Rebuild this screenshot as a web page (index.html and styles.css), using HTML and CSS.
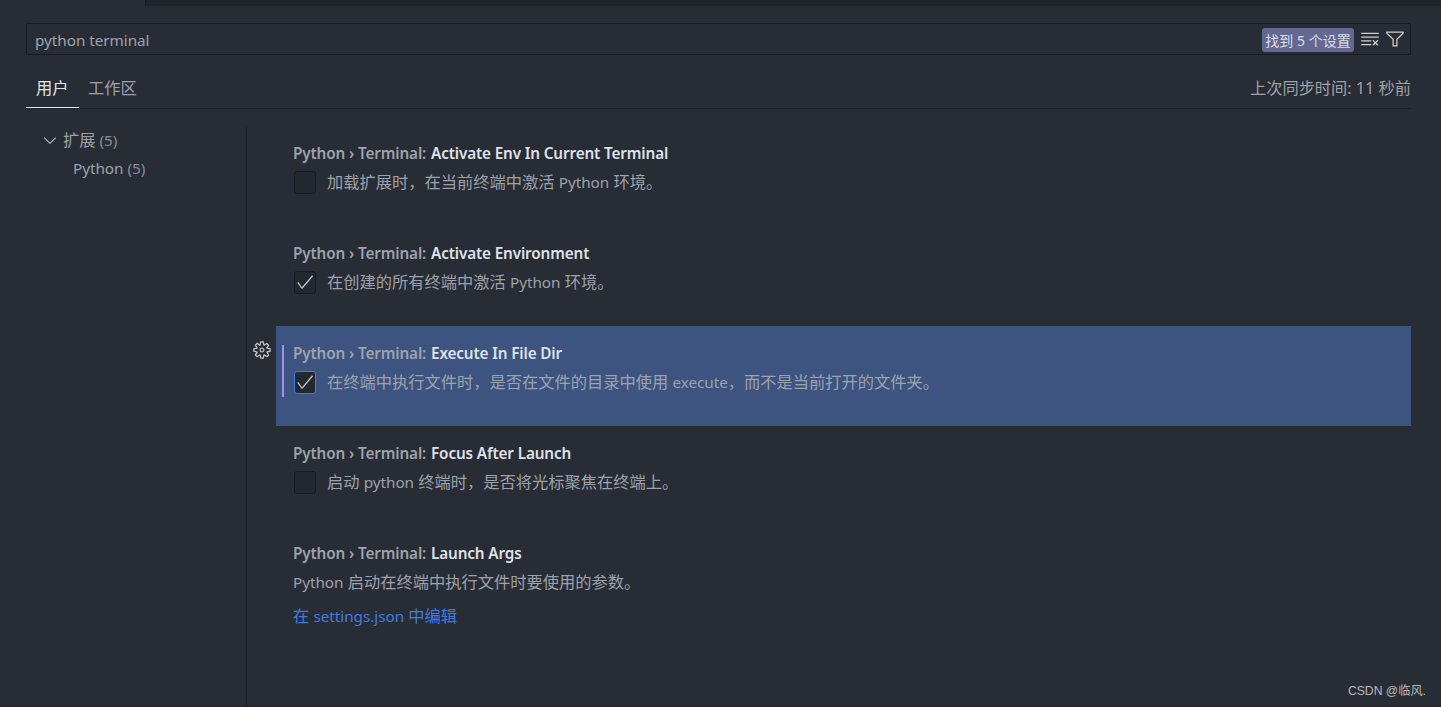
FILE: index.html
```
<!DOCTYPE html>
<html lang="zh-CN">
<head>
  <meta charset="UTF-8">
  <title>设置</title>
  <link rel="stylesheet" href="styles.css">
</head>
<body>
  <div class="tab-strip"></div>
  <div class="settings">
    <div class="search">
      <span class="search-text en">python terminal</span>
      <span class="badge">找到 5 个设置</span>
      <svg class="icon" viewBox="0 0 16 16"><path d="M10 12.6l.7.7 1.6-1.6 1.6 1.6.8-.7L13 11l1.7-1.6-.8-.8-1.6 1.7-1.6-1.7-.7.8 1.6 1.6-1.6 1.6zM1 4h14V3H1v1zm0 3h14V6H1v1zm8 2.5V9H1v1h8v-.5zM9 13v-1H1v1h8z"/></svg>
      <svg class="icon filter" viewBox="0 0 16 16"><path d="M15 2v1.67l-5 4.759V14H6V8.429l-5-4.76V2h14zM7 8v5h2V8l5-4.76V3H2v.24L7 8z"/></svg>
    </div>

    <div class="scope">
      <div class="scope-tab active">用户</div>
      <div class="scope-tab">工作区</div>
      <div class="sync">上次同步时间: 11 秒前</div>
    </div>

    <div class="main">
      <div class="toc">
        <div class="toc-row">
          <svg class="chevron" viewBox="0 0 16 16"><path d="M7.976 10.072l4.357-4.357.62.618L8.284 11h-.618L3 6.333l.619-.618 4.357 4.357z"/></svg>
          <span>扩展</span><span class="en count">(5)</span>
        </div>
        <div class="toc-row child"><span class="en">Python</span><span class="en count">(5)</span></div>
      </div>

      <div class="list">
        <div class="item">
          <div class="title"><span class="category">Python › Terminal:</span><span class="name">Activate Env In Current Terminal</span></div>
          <div class="desc"><span class="checkbox"></span><span>加载扩展时，在当前终端中激活 <span class="en">Python</span> 环境。</span></div>
        </div>
        <div class="item">
          <div class="title"><span class="category">Python › Terminal:</span><span class="name">Activate Environment</span></div>
          <div class="desc"><span class="checkbox"><svg class="check" viewBox="0 0 16 16"><path d="M14.431 3.323l-8.47 10-.79-.036-3.35-4.77.818-.574 2.978 4.24 8.051-9.506.764.646z"/></svg></span><span>在创建的所有终端中激活 <span class="en">Python</span> 环境。</span></div>
        </div>
        <div class="item selected">
          <svg class="gear" viewBox="0 0 16 16"><path fill-rule="evenodd" d="M9.1 4.4L8.6 2H7.4l-.5 2.4-.7.3-2-1.3-.9.8 1.3 2-.2.7-2.4.5v1.2l2.4.5.3.8-1.3 2 .8.8 2-1.3.8.3.4 2.3h1.2l.5-2.4.8-.3 2 1.3.8-.8-1.3-2 .3-.8 2.3-.4V7.4l-2.4-.5-.3-.8 1.3-2-.8-.8-2 1.3-.7-.2zM9.4 1l.5 2.4L12 2.1l2 2-1.4 2.1 2.4.4v2.8l-2.4.5L14 12l-2 2-2.1-1.4-.5 2.4H6.6l-.5-2.4L4 13.9l-2-2 1.4-2.1L1 9.4V6.6l2.4-.5L2.1 4l2-2 2.1 1.4.4-2.4h2.8zm.6 7c0 1.1-.9 2-2 2s-2-.9-2-2 .9-2 2-2 2 .9 2 2zM8 9c.6 0 1-.4 1-1s-.4-1-1-1-1 .4-1 1 .4 1 1 1z"/></svg>
          <div class="modified"></div>
          <div class="title"><span class="category">Python › Terminal:</span><span class="name">Execute In File Dir</span></div>
          <div class="desc"><span class="checkbox focused"><svg class="check" viewBox="0 0 16 16"><path d="M14.431 3.323l-8.47 10-.79-.036-3.35-4.77.818-.574 2.978 4.24 8.051-9.506.764.646z"/></svg></span><span>在终端中执行文件时，是否在文件的目录中使用 <span class="en">execute</span>，而不是当前打开的文件夹。</span></div>
        </div>
        <div class="item">
          <div class="title"><span class="category">Python › Terminal:</span><span class="name">Focus After Launch</span></div>
          <div class="desc"><span class="checkbox"></span><span>启动 <span class="en">python</span> 终端时，是否将光标聚焦在终端上。</span></div>
        </div>
        <div class="item">
          <div class="title"><span class="category">Python › Terminal:</span><span class="name">Launch Args</span></div>
          <div class="desc"><span><span class="en">Python</span> 启动在终端中执行文件时要使用的参数。</span></div>
          <a class="link">在 <span class="en">settings.json</span> 中编辑</a>
        </div>
      </div>
    </div>
  </div>
  <div class="watermark">CSDN @临风.</div>
</body>
</html>
```
FILE: styles.css
```
* {
  box-sizing: border-box;
}

body {
  margin: 0;
  height: 707px;
  overflow: hidden;
  display: flex;
  flex-direction: column;
  background: #282c34;
  border-bottom: 1px solid #1e2127;
  color: #9da2ac;
  font-family: "Noto Sans", "Noto Sans CJK SC", sans-serif;
  font-size: 16.25px;
  line-height: 24px;
  white-space: nowrap;
}

.en {
  font-size: 15.3px;
  letter-spacing: -0.05px;
}

.tab-strip {
  height: 6px;
  flex: none;
  margin-left: 145px;
  background: #21252b;
  border-left: 1px solid #181a1f;
}

.settings {
  flex: 1;
  min-height: 0;
  display: flex;
  flex-direction: column;
  padding: 17px 30px 0 26px;
}

.search {
  height: 32px;
  flex: none;
  display: flex;
  align-items: center;
  padding: 0 5px 0 8px;
  border: 1px solid #181a1f;
  border-radius: 2px;
}

.search-text {
  flex: 1;
  padding-top: 1px;
}

.badge {
  width: 92px;
  height: 24px;
  margin: 2px 6px 0 0;
  background: #626891;
  border-radius: 3px;
  color: #dcdfe6;
  font-size: 14px;
  line-height: 25px;
  text-align: center;
}

.icon {
  width: 20px;
  height: 20px;
  fill: #d0d0d0;
}

.filter {
  margin-left: 5px;
}

.scope {
  height: 54px;
  flex: none;
  display: flex;
  border-bottom: 1px solid #20232a;
}

.scope-tab {
  height: 53px;
  padding: 21px 9px 0;
}

.scope-tab.active {
  width: 53px;
  padding-left: 10px;
  color: #e5e5e5;
  border-bottom: 1px solid #e5e5e5;
}

.sync {
  margin-left: auto;
  padding-top: 21px;
  letter-spacing: -0.03px;
}

.main {
  flex: 1;
  min-height: 0;
  display: flex;
  padding-top: 17px;
}

.toc {
  width: 221px;
  border-right: 1px solid #20232a;
}

.toc-row {
  height: 28px;
  display: flex;
  align-items: center;
  padding-left: 14px;
}

.toc-row.child {
  padding-left: 47px;
}

.chevron {
  width: 20px;
  height: 20px;
  margin-right: 3px;
  fill: #b4b7bd;
}

.count {
  margin-left: 4px;
  color: #888d97;
}

.list {
  flex: 1;
  margin-left: 29px;
}

.item {
  position: relative;
  height: 100px;
  padding: 15px 0 0 17px;
}

.item.selected {
  background: #3d5480;
}

.title {
  height: 25px;
  display: flex;
  font-size: 15.3px;
  font-weight: 600;
  letter-spacing: -0.14px;
}

.category {
  width: 138px;
}

.name {
  color: #dfe2e8;
}

.desc {
  height: 32px;
  display: flex;
  align-items: center;
}

.checkbox {
  width: 22px;
  height: 23px;
  margin: 1px 11px 0 1px;
  display: flex;
  align-items: flex-start;
  justify-content: center;
  background: #23272e;
  border: 1px solid #181a1f;
  border-radius: 3px;
}

.checkbox.focused {
  border-color: #3e7ef0;
}

.check {
  width: 20px;
  height: 20px;
  flex: none;
  fill: #c5c9d0;
}

/* gear sits outside the row, left of the highlight */
.gear {
  position: absolute;
  left: -24px;
  top: 14px;
  width: 20px;
  height: 20px;
  fill: #c5c5c5;
}

.modified {
  position: absolute;
  left: 6px;
  top: 19px;
  width: 2px;
  height: 52px;
  background: #a98cf5;
}

.link {
  display: block;
  margin-top: 6px;
  color: #3f7ce0;
}

.watermark {
  position: absolute;
  right: 15px;
  bottom: 6px;
  font-family: "Liberation Sans", "Noto Sans CJK SC", sans-serif;
  font-size: 12.2px;
  line-height: 20px;
  color: #b8babd;
}
```
